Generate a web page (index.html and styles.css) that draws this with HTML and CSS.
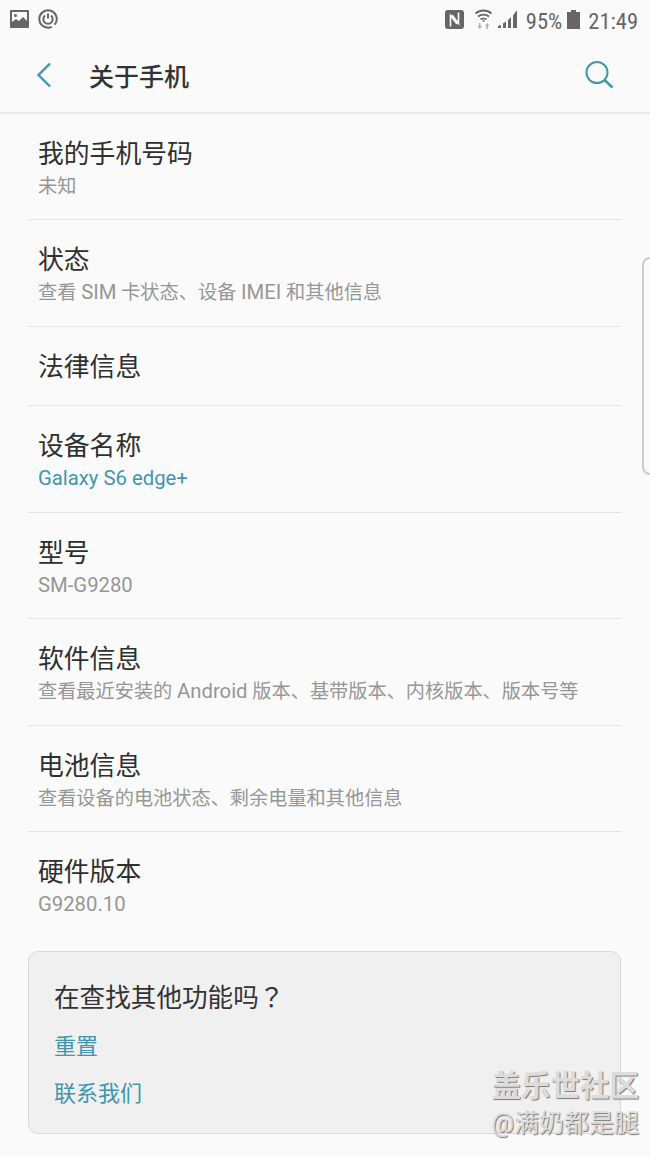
FILE: index.html
```html
<!DOCTYPE html>
<html lang="zh-CN">
<head>
    <meta charset="UTF-8">
    <meta name="viewport" content="width=device-width, initial-scale=1.0">
    <title>关于手机</title>
    <link rel="stylesheet" href="styles.css">
</head>
<body>
    <div class="phone">
        <div class="status-bar">
            <div class="status-left">
                <svg width="19" height="18" viewBox="0 0 19 18"><path fill="#666" fill-rule="evenodd" d="M1 0h17a1 1 0 0 1 1 1v16a1 1 0 0 1-1 1H1a1 1 0 0 1-1-1V1a1 1 0 0 1 1-1zm1 2v10l4-3 3 2 4-4 4 4V2z"/><circle cx="5.500" cy="5.500" r="1.500" fill="#666"/></svg>
                <svg width="20" height="20" viewBox="0 0 20 20"><path fill="none" stroke="#666" stroke-width="2" d="M13.700 17.900A8.700 8.700 0 1 1 16.700 15.600"/><path fill="none" stroke="#666" stroke-width="2" d="M13 6.500a4.700 4.700 0 1 1-6 0"/><path stroke="#666" stroke-width="2" d="M10 4.500v5"/></svg>
            </div>
            <div class="status-right">
                <svg class="icon-nfc" width="19" height="19" viewBox="0 0 19 19"><rect width="19" height="19" rx="3" fill="#666"/><path fill="none" stroke="#fafafa" stroke-width="1.600" d="M5.500 16.500V5.500L12 14M13.500 2.500V13.500L7 5"/></svg>
                <svg class="icon-wifi" width="17" height="20" viewBox="0 0 17 20"><path fill="none" stroke="#666" stroke-width="1.800" d="M.5 4.500c4.500-4 11.500-4 16 0M3 7.500c3-2.500 8-2.500 11 0M5.500 10.300c1.500-1 4.500-1 6 0"/><circle cx="8.500" cy="12" r="1" fill="#666"/><path fill="#b0b0b0" d="M4 14h1.500v3h1.500l-2.250 3-2.250-3h1.500zM11.500 20h1.500v-3h1.500l-2.250-3-2.250 3h1.500z"/></svg>
                <svg class="icon-signal" width="19" height="18" viewBox="0 0 19 18"><path fill="#666" d="M0 16l3-1v3H0zM5 13.500l3-2V18H5zM10 10l3-3v11h-3zM15 5.500 19 0v18h-4z"/></svg>
                <span class="battery-text">95%</span>
                <svg class="icon-battery" width="13" height="19" viewBox="0 0 13 19"><path fill="#666" d="M4 0h5v2h4v17H0V2h4z"/></svg>
                <span class="clock">21:49</span>
            </div>
        </div>

        <header class="app-bar">
            <svg class="back" width="16" height="26" viewBox="0 0 16 26"><path fill="none" stroke="#4096ad" stroke-width="2.400" d="M14 1.500 2.500 13 14 24.500"/></svg>
            <h1>关于手机</h1>
            <svg class="search" width="30" height="30" viewBox="0 0 30 30"><circle cx="13" cy="12.500" r="10.500" fill="none" stroke="#4096ad" stroke-width="2"/><path stroke="#4096ad" stroke-width="2.400" d="m20.500 20 8 7.500"/></svg>
        </header>

        <main class="list">
            <div class="row">
                <div class="title">我的手机号码</div>
                <div class="sub">未知</div>
            </div>
            <div class="row">
                <div class="title">状态</div>
                <div class="sub">查看 <span class="latin">SIM</span> 卡状态、设备 <span class="latin">IMEI</span> 和其他信息</div>
            </div>
            <div class="row single">
                <div class="title">法律信息</div>
            </div>
            <div class="row">
                <div class="title">设备名称</div>
                <div class="sub accent"><span class="latin">Galaxy S6 edge+</span></div>
            </div>
            <div class="row">
                <div class="title">型号</div>
                <div class="sub"><span class="latin">SM-G9280</span></div>
            </div>
            <div class="row">
                <div class="title">软件信息</div>
                <div class="sub">查看最近安装的 <span class="latin">Android</span> 版本、基带版本、内核版本、版本号等</div>
            </div>
            <div class="row">
                <div class="title">电池信息</div>
                <div class="sub">查看设备的电池状态、剩余电量和其他信息</div>
            </div>
            <div class="row last">
                <div class="title">硬件版本</div>
                <div class="sub"><span class="latin">G9280.10</span></div>
            </div>
        </main>

        <section class="more">
            <h2>在查找其他功能吗<span class="qmark" lang="ja">？</span></h2>
            <a class="more-link">重置</a>
            <a class="more-link">联系我们</a>
        </section>

        <div class="edge-handle"></div>
        <div class="watermark">
            <div class="wm-site">盖乐世社区</div>
            <div class="wm-user">@满奶都是腿</div>
        </div>
    </div>
</body>
</html>
```

FILE: styles.css
```css
* {
    box-sizing: border-box;
}

body {
    margin: 0;
    background-color: #fafafa;
    font-family: Roboto, "Noto Sans CJK SC", sans-serif;
}

.phone {
    position: relative;
    width: 650px;
    height: 1156px;
    overflow: hidden;
}

.status-bar {
    height: 38px;
    padding: 0 12px 0 10px;
    display: flex;
    justify-content: space-between;
    align-items: center;
    color: #666;
}

.status-left,
.status-right {
    display: flex;
    align-items: center;
}

.status-left {
    gap: 9px;
}

.icon-nfc {
    margin-right: 11px;
}

.icon-wifi {
    margin-right: 6px;
}

.icon-signal {
    margin-right: 9px;
}

.icon-battery {
    margin: 0 8px 0 5px;
}

.battery-text,
.clock {
    margin-top: 4px;
    font-size: 22.500px;
    line-height: 26px;
    font-stretch: condensed;
}

.app-bar {
    height: 75.500px;
    padding: 0 36px;
    display: flex;
    align-items: center;
    border-bottom: 2px solid #e9e9e9;
}

.back {
    margin-right: 37px;
}

.app-bar h1 {
    flex: 1;
    margin: 0;
    font-size: 25px;
    font-weight: 500;
    color: #333;
}

.list {
    margin: 0 29px 0 28px;
}

.row {
    height: 106.500px;
    padding: 24px 10px 0;
    border-bottom: 1px solid #e4e4e4;
}

.row.single {
    height: 79.500px;
}

.row.last {
    border-bottom: none;
}

.title {
    font-size: 25.800px;
    line-height: 33px;
    color: #2f2f2f;
}

.sub {
    margin-top: 2px;
    font-size: 19.200px;
    line-height: 28px;
    color: #969696;
}

.sub.accent {
    color: #4096ad;
}

.latin {
    font-size: 20.300px;
    line-height: 1;
}

.more {
    margin: 12.500px 29px 0 28px;
    height: 183px;
    padding: 27px 25px 0;
    background-color: #f0f0f0;
    border: 1px solid #d9d9d9;
    border-radius: 10px;
}

.more h2 {
    margin: 0 0 16px;
    font-size: 25.600px;
    line-height: 34px;
    font-weight: 400;
    color: #333;
}

.qmark {
    font-family: "Noto Sans CJK JP", sans-serif;
}

.more-link {
    display: block;
    margin-bottom: 15px;
    font-size: 22px;
    line-height: 32px;
    color: #4096ad;
}

.edge-handle {
    position: absolute;
    top: 257px;
    right: -8px;
    width: 16px;
    height: 218px;
    border: 2px solid #ccc;
    border-radius: 8px;
}

.watermark {
    position: absolute;
    right: 11px;
    top: 1067px;
    text-align: right;
    color: #dcdcdc;
    text-shadow: 1px 1px 1px #777;
}

.wm-site {
    font-size: 29.500px;
    line-height: 38px;
    font-weight: 700;
}

.wm-user {
    font-size: 25px;
    line-height: 38px;
}
```
